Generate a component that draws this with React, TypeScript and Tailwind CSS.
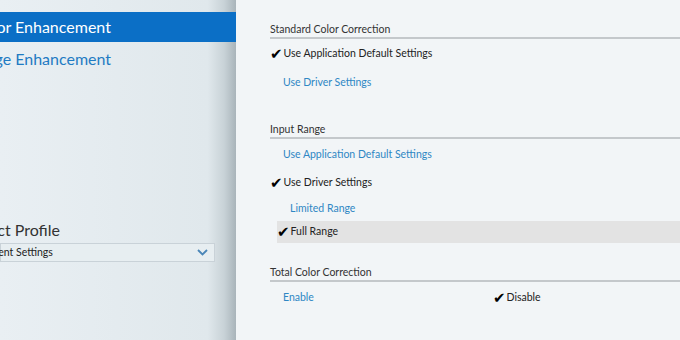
import React from 'react';

const Check: React.FC = () => (
  <span className="font-['DejaVu_Sans',sans-serif] text-[15px] leading-none text-black mr-[1px]">✔</span>
);

const Heading: React.FC<{ title: string; className?: string }> = ({ title, className }) => (
  <div className={`text-[10.5px] leading-[14px] text-[#333] pb-[1px] border-b-2 border-[#c4c8cb] ${className ?? ''}`}>
    {title}
  </div>
);

const Link: React.FC<{ label: string; className?: string; h?: string }> = ({ label, className, h = 'h-[28px]' }) => (
  <div className={`${h} flex items-center text-[10.5px] text-[#2f87c4] ${className ?? ''}`}>{label}</div>
);

const Checked: React.FC<{ label: string }> = ({ label }) => (
  <div className="h-[28px] flex items-center text-[10.5px] text-[#222]">
    <Check />
    {label}
  </div>
);

export default function App() {
  return (
    <div className="w-[680px] h-[340px] flex overflow-hidden font-['Lato','Noto_Sans',sans-serif] bg-[#f2f5f7]">
      {/* Sidebar */}
      <div className="w-[236px] shrink-0 overflow-hidden pt-[12px] flex flex-col bg-[linear-gradient(to_right,#e9eff3_0%,#e0e8ec_88%,#c8d2d7_95%,#a9b4ba_100%)]">
        <div className="h-[30px] bg-[#0b6fc6] flex items-center text-white text-[16px] whitespace-nowrap">
          <span className="-ml-[27px]">Color Enhancement</span>
        </div>
        <div className="h-[34px] flex items-center text-[#1f7bc3] text-[16px] whitespace-nowrap">
          <span className="-ml-[31px]">Image Enhancement</span>
        </div>

        <div className="mt-[142px] h-[24px] flex items-center text-[16px] text-[#333] whitespace-nowrap">
          <span className="-ml-[32px]">Select Profile</span>
        </div>
        <div className="mt-[1px] w-[215px] h-[19px] border border-[#c9d2d8] bg-[#e7eef1] flex items-center justify-between pr-[6px] text-[10.5px] text-[#222] whitespace-nowrap">
          <span className="-ml-[23px]">Current Settings</span>
          <svg width="11" height="7" viewBox="0 0 11 7" className="text-[#4a86b8]">
            <path d="M1 1l4.5 4.5L10 1" fill="none" stroke="currentColor" strokeWidth="1.8" />
          </svg>
        </div>
      </div>

      {/* Main */}
      <div className="flex-1 pt-[22px] pl-[34px] flex flex-col">
        <Heading title="Standard Color Correction" />
        <div className="mt-[1px]">
          <Checked label="Use Application Default Settings" />
          <Link label="Use Driver Settings" className="pl-[13px] pt-[2px]" />
        </div>

        <Heading title="Input Range" className="mt-[26px]" />
        <div className="mt-[2px]">
          <Link label="Use Application Default Settings" className="pl-[13px]" />
          <Checked label="Use Driver Settings" />
          <Link label="Limited Range" className="pl-[20px]" h="h-[24px]" />
          <div className="ml-[7px] h-[22px] bg-[#e3e3e3] flex items-center text-[10.5px] text-[#222]">
            <Check />
            Full Range
          </div>
        </div>

        <Heading title="Total Color Correction" className="mt-[22px]" />
        <div className="mt-[2px] flex">
          <div className="w-[223px]">
            <Link label="Enable" className="pl-[13px]" />
          </div>
          <Checked label="Disable" />
        </div>
      </div>
    </div>
  );
}
